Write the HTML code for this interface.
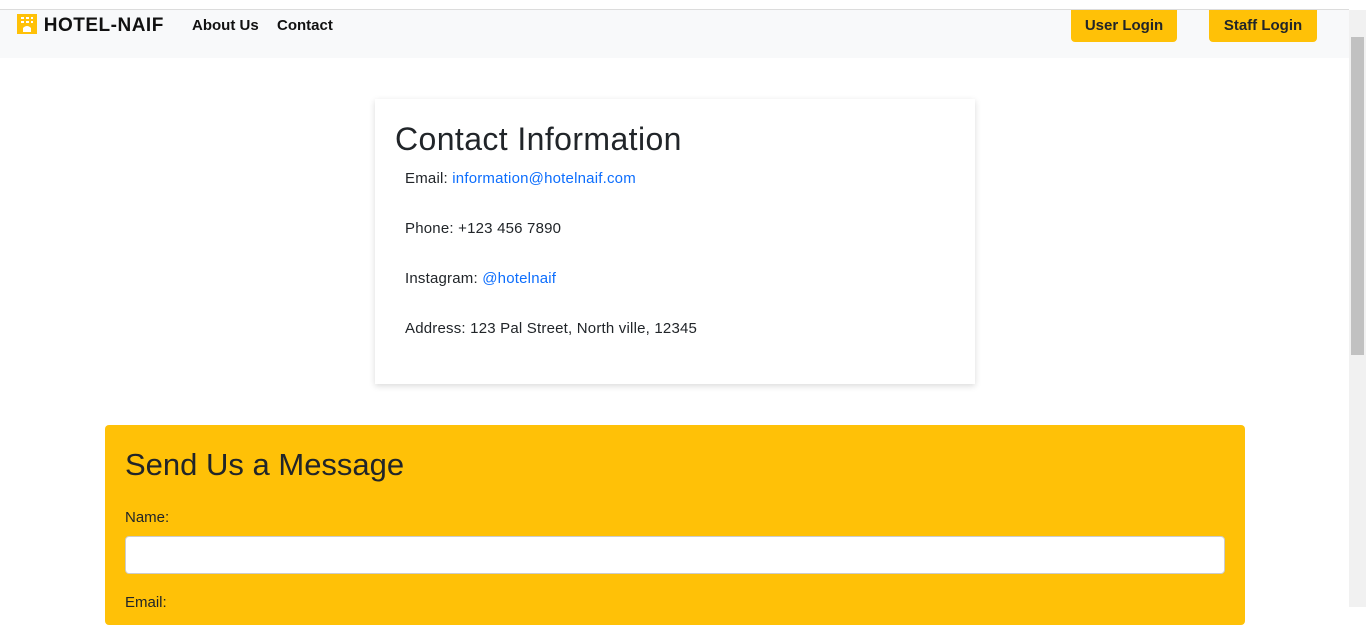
<!DOCTYPE html>
<html><head><style>
body{margin:0;width:1366px;height:607px;overflow:hidden;background:#fff;font-family:"Liberation Sans",sans-serif;color:#212529;position:relative}
.top{position:absolute;left:0;top:0;width:1349px;height:9px;background:#fff;border-bottom:1px solid #dcdcdc}
.nav{position:absolute;left:0;top:10px;width:1349px;height:48px;background:#f8f9fa}
.brand{position:absolute;left:16px;top:4px;font-weight:bold;font-size:19px;color:#111;letter-spacing:.5px}
.nl{position:absolute;top:7px;font-weight:bold;font-size:15px;color:#111}
.btn{position:absolute;top:0;height:32px;background:#ffc107;border-radius:0 0 4px 4px;font-weight:bold;font-size:15px;line-height:31px;text-align:center;color:#212529}
.sb{position:absolute;right:0;top:10px;width:17px;height:597px;background:#f1f1f1}
.thumb{position:absolute;left:2px;top:27px;width:13px;height:318px;background:#c1c1c1}
.card{position:absolute;left:375px;top:99px;width:600px;height:285px;background:#fff;box-shadow:0 2px 6px rgba(0,0,0,.15)}
h2{margin:0;font-weight:500;font-size:31px;position:absolute;left:20px;top:22px}
.card h2{font-size:32px;letter-spacing:.4px}
.p{position:absolute;left:30px;font-size:15px;letter-spacing:.2px}
a{color:#0d6efd;text-decoration:none}
.msg{position:absolute;left:105px;top:425px;width:1140px;height:200px;background:#ffc107;border-radius:4px}
.msg h2{left:20px;top:22px}
.lb{position:absolute;left:20px;font-size:15px}
.in{position:absolute;left:20px;top:111px;width:1098px;height:36px;background:#fff;border:1px solid #ccc;border-radius:4px}
</style></head><body>
<div class="top"></div>
<div class="nav">
<div class="brand"><svg width="22" height="20" viewBox="0 0 22 20" style="vertical-align:-3px"><rect x="1" y="0" width="20" height="20" fill="#ffc107"/><g fill="#fff"><rect x="5" y="3" width="3" height="2"/><rect x="10" y="3" width="3" height="2"/><rect x="15" y="3" width="2" height="2"/><rect x="5" y="7" width="3" height="2"/><rect x="10" y="7" width="3" height="2"/><rect x="15" y="7" width="2" height="2"/><path d="M7 18 L7 14 Q11 10 15 14 L15 18Z"/></g></svg> HOTEL-NAIF</div>
<div class="nl" style="left:192px">About Us</div>
<div class="nl" style="left:277px">Contact</div>
<div class="btn" style="left:1071px;width:106px">User Login</div>
<div class="btn" style="left:1209px;width:108px">Staff Login</div>
</div>
<div class="sb"><div class="thumb"></div></div>
<div class="card">
<h2>Contact Information</h2>
<div class="p" style="top:71px">Email: <a>information@hotelnaif.com</a></div>
<div class="p" style="top:121px">Phone: +123 456 7890</div>
<div class="p" style="top:171px">Instagram: <a>@hotelnaif</a></div>
<div class="p" style="top:221px">Address: 123 Pal Street, North ville, 12345</div>
</div>
<div class="msg">
<h2>Send Us a Message</h2>
<div class="lb" style="top:84px">Name:</div>
<div class="in"></div>
<div class="lb" style="top:169px">Email:</div>
</div>
</body></html>
